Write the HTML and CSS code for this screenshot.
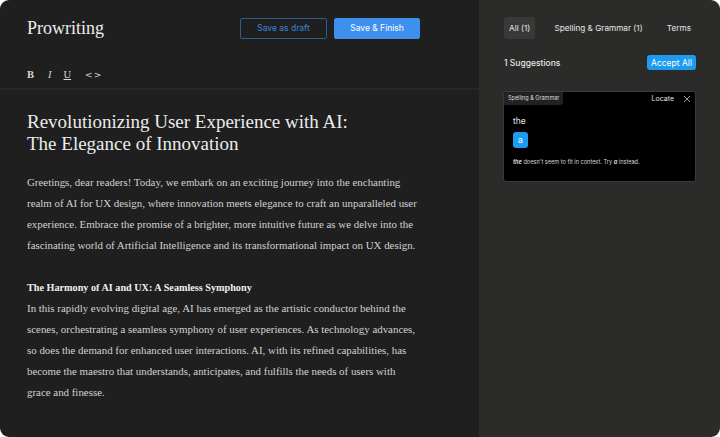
FILE: index.html
```html
<!DOCTYPE html>
<html>
<head>
<meta charset="utf-8">
<link rel="stylesheet" href="styles.css">
</head>
<body>
<div class="app">
  <main class="editor">
    <header class="topbar">
      <div class="brand">Prowriting</div>
      <div class="actions">
        <button class="btn btn-outline">Save as draft</button>
        <button class="btn btn-primary">Save &amp; Finish</button>
      </div>
    </header>
    <div class="toolbar">
      <span class="tool tool-b">B</span>
      <span class="tool tool-i">I</span>
      <span class="tool tool-u">U</span>
      <span class="tool tool-code">&lt;&gt;</span>
    </div>
    <article class="doc">
      <h1 class="doc-title">Revolutionizing User Experience with AI:<br>The Elegance of Innovation</h1>
      <p class="doc-p">Greetings, dear readers! Today, we embark on an exciting journey into the enchanting realm of AI for UX design, where innovation meets elegance to craft an unparalleled user experience. Embrace the promise of a brighter, more intuitive future as we delve into the fascinating world of Artificial Intelligence and its transformational impact on UX design.</p>
      <h2 class="doc-sub">The Harmony of AI and UX: A Seamless Symphony</h2>
      <p class="doc-p">In this rapidly evolving digital age, AI has emerged as the artistic conductor behind the scenes, orchestrating a seamless symphony of user experiences. As technology advances, so does the demand for enhanced user interactions. AI, with its refined capabilities, has become the maestro that understands, anticipates, and fulfills the needs of users with grace and finesse.</p>
    </article>
  </main>
  <aside class="side">
    <nav class="tabs">
      <span class="tab active">All (1)</span>
      <span class="tab">Spelling &amp; Grammar (1)</span>
      <span class="tab">Terms</span>
    </nav>
    <div class="sugg-head">
      <span class="sugg-count">1 Suggestions</span>
      <button class="btn-accept">Accept All</button>
    </div>
    <div class="card">
      <div class="card-top">
        <span class="tag">Spelling &amp; Grammar</span>
        <div class="card-tools">
          <span class="locate">Locate</span>
          <svg class="close" width="8" height="8" viewBox="0 0 8 8"><path d="M1 1L7 7M7 1L1 7" stroke="#9a9a9a" stroke-width="1"/></svg>
        </div>
      </div>
      <div class="card-body">
        <div class="orig">the</div>
        <span class="chip">a</span>
        <p class="explain"><b><i>the</i></b> doesn't seem to fit in context. Try <b><i>a</i></b> instead.</p>
      </div>
    </div>
  </aside>
</div>
</body>
</html>
```
FILE: styles.css
```css
* { box-sizing: border-box; }
html, body { margin: 0; padding: 0; background: #ffffff; }
body { width: 720px; height: 437px; overflow: hidden; }
.app {
  display: flex;
  width: 720px;
  height: 437px;
  border-radius: 9px;
  overflow: hidden;
}
.editor {
  width: 479px;
  background: #1f1f1f;
  display: flex;
  flex-direction: column;
}
.topbar {
  display: flex;
  align-items: center;
  height: 56px;
  padding: 0 0 0 27px;
}
.brand {
  font-family: "Liberation Serif", serif;
  font-size: 18px;
  color: #ececec;
  width: 213px;
  padding-top: 1px;
}
.actions { display: flex; gap: 7px; }
.btn {
  font-family: Inter, sans-serif;
  font-size: 8.5px;
  height: 21px;
  border-radius: 2px;
  padding: 0;
  cursor: pointer;
}
.btn-outline {
  width: 87px;
  background: transparent;
  border: 1px solid #2f5b8e;
  color: #3a86dc;
}
.btn-primary {
  width: 86px;
  background: #3d90ee;
  border: 1px solid #3d90ee;
  color: #ffffff;
}
.toolbar {
  display: flex;
  align-items: center;
  height: 34px;
  padding: 5px 0 0 27px;
  font-family: "Liberation Serif", serif;
  font-size: 10.5px;
  color: #d8d8d8;
  border-bottom: 2px solid #272727;
}
.tool { margin-right: 14px; }
.tool-b { font-weight: bold; }
.tool-i { font-style: italic; margin-right: 12px; }
.tool-u { text-decoration: underline; margin-right: 14px; }
.tool-code { letter-spacing: 1px; font-family: "DejaVu Sans", sans-serif; font-size: 9px; }
.doc {
  padding: 21px 27px 0 27px;
  font-family: "Liberation Serif", serif;
  color: #d2d2d2;
}
.doc-title {
  margin: 0;
  font-weight: normal;
  font-size: 19px;
  line-height: 22px;
  color: #ececec;
}
.doc-p {
  margin: 17px 0 0 0;
  font-size: 10.9px;
  line-height: 21px;
  max-width: 392px;
}
.doc-sub {
  margin: 21px 0 0 0;
  font-size: 10.2px;
  line-height: 21px;
  font-weight: bold;
  color: #f0f0f0;
}
.doc-sub + .doc-p { margin-top: 0; }
.side {
  width: 241px;
  background: #2b2b2a;
  padding: 16px 24px 0 25px;
  font-family: Inter, sans-serif;
  color: #e6e6e6;
}
.tabs {
  display: flex;
  justify-content: space-between;
  align-items: center;
  padding-top: 1px;
}
.tab {
  font-size: 8.2px;
  height: 22px;
  line-height: 22px;
  padding: 0 5px;
  border-radius: 3px;
}
.tab.active { background: #393939; }
.sugg-head {
  display: flex;
  justify-content: space-between;
  align-items: center;
  margin-top: 16px;
}
.sugg-count { font-size: 8.5px; font-weight: 500; }
.btn-accept {
  font-family: Inter, sans-serif;
  font-size: 8.5px;
  color: #ffffff;
  background: #1d9bf0;
  border: none;
  border-radius: 3px;
  height: 15px;
  width: 49px;
  padding: 0;
}
.card {
  margin-top: 21px;
  margin-left: -1px;
  background: #000000;
  border: 1px solid #3a3a3a;
  border-radius: 3px;
  height: 91px;
}
.card-top {
  display: flex;
  justify-content: space-between;
  align-items: center;
}
.tag {
  font-size: 5.5px;
  background: #222222;
  color: #dcdcdc;
  padding: 0 4px;
  height: 13px;
  line-height: 13px;
  border-radius: 0 0 3px 0;
}
.card-tools { display: flex; align-items: center; gap: 9px; padding-right: 4px; }
.locate { font-size: 7px; color: #e0e0e0; }
.close { display: block; }
.card-body { padding: 11px 9px 0 9px; }
.orig { font-size: 8.5px; color: #e6e6e6; }
.chip {
  display: inline-block;
  margin-top: 6px;
  width: 15px;
  height: 16px;
  line-height: 16px;
  text-align: center;
  background: #1d9bf0;
  color: #ffffff;
  border-radius: 3px;
  font-size: 8.5px;
}
.explain {
  margin: 11px 0 0 0;
  font-size: 5.6px;
  color: #d8d8d8;
}
```
